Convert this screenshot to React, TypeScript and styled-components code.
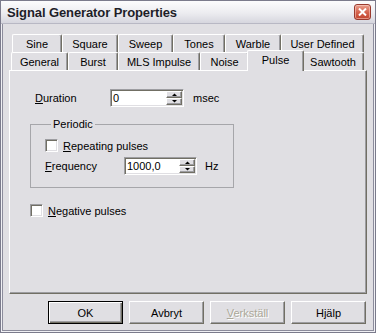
import React from 'react';
import styled, { createGlobalStyle } from 'styled-components';

const Global = createGlobalStyle`
  html, body { margin: 0; padding: 0; background: #e0dfe3; }
  body { font-family: "Liberation Sans", Arial, sans-serif; font-size: 11px; color: #000; }
`;

const FACE = '#e0dfe3';
const SHADOW = '#9d9da1';
const DARK = '#716f64';

const Window = styled.div`
  width: 376px;
  height: 333px;
  box-sizing: border-box;
  border: 1px solid #7b7b8c;
  box-shadow: inset 0 0 0 1px #f0f0f4, inset 0 0 0 2px #8c8c9c;
  background: ${FACE};
  display: flex;
  flex-direction: column;
`;

const TitleBar = styled.div`
  height: 22px;
  flex: none;
  display: flex;
  align-items: center;
  justify-content: space-between;
  padding: 0 4px 0 6px;
  background: linear-gradient(#fcfcfd, #ececf0 55%, #d6d6de);
  border-bottom: 1px solid #b8b8c4;
`;

const Title = styled.span`
  font-weight: bold;
  font-size: 13px;
  color: #1e1e28;
  letter-spacing: -0.1px;
`;

const CloseBtn = styled.div`
  width: 17px;
  height: 16px;
  box-sizing: border-box;
  border: 1px solid #9a3a2e;
  border-radius: 3px;
  background: linear-gradient(#eaa08f, #d4604a 55%, #c2452f);
  box-shadow: inset 0 0 0 1px rgba(255, 220, 210, 0.5);
  display: flex;
  align-items: center;
  justify-content: center;
`;

const Body = styled.div`
  flex: 1;
  display: flex;
  flex-direction: column;
  padding: 10px 8px 0 8px;
`;

const TabRow = styled.div<{ $indent: number }>`
  display: flex;
  align-items: flex-end;
  height: 18px;
  padding-left: ${p => p.$indent}px;
`;

const Tab = styled.div<{ $w: number; $sel?: boolean }>`
  box-sizing: border-box;
  width: ${p => p.$w + (p.$sel ? 4 : 0)}px;
  height: ${p => (p.$sel ? 21 : 18)}px;
  margin: ${p => (p.$sel ? '0 -2px -1px -2px' : '0')};
  padding-bottom: ${p => (p.$sel ? 3 : 0)}px;
  position: ${p => (p.$sel ? 'relative' : 'static')};
  z-index: ${p => (p.$sel ? 1 : 'auto')};
  background: ${FACE};
  border-top: 1px solid #fff;
  border-left: 1px solid #fff;
  border-right: 1px solid ${DARK};
  box-shadow: inset -1px 0 0 ${SHADOW};
  border-radius: 2px 2px 0 0;
  display: flex;
  align-items: center;
  justify-content: center;
  white-space: nowrap;
`;

const Panel = styled.div`
  box-sizing: border-box;
  height: 224px;
  border-top: 1px solid #fff;
  border-left: 1px solid #fff;
  border-right: 1px solid ${DARK};
  border-bottom: 1px solid ${DARK};
  box-shadow: inset -1px -1px 0 ${SHADOW};
  padding: 18px 0 0 20px;
  display: flex;
  flex-direction: column;
  align-items: flex-start;
`;

const FieldRow = styled.div<{ $label: number }>`
  display: flex;
  align-items: center;
  height: 18px;
  & > label {
    width: ${p => p.$label}px;
    flex: none;
  }
`;

const DurationRow = styled(FieldRow)`
  padding-left: 5px;
`;

const Unit = styled.span<{ $gap: number }>`
  margin-left: ${p => p.$gap}px;
`;

const Field = styled.div<{ $w: number }>`
  box-sizing: border-box;
  width: ${p => p.$w}px;
  height: 18px;
  display: flex;
  background: #fff;
  border-top: 1px solid ${SHADOW};
  border-left: 1px solid ${SHADOW};
  border-bottom: 1px solid #fff;
  border-right: 1px solid #fff;
  box-shadow: inset 1px 1px 0 ${DARK}, inset -1px -1px 0 ${FACE};
  padding: 1px;
`;

const Value = styled.span`
  flex: 1;
  padding-left: 1px;
  line-height: 14px;
`;

const Spin = styled.div`
  width: 16px;
  display: flex;
  flex-direction: column;
`;

const SpinBtn = styled.div`
  flex: 1;
  box-sizing: border-box;
  background: ${FACE};
  border-top: 1px solid #fff;
  border-left: 1px solid #fff;
  border-right: 1px solid ${DARK};
  border-bottom: 1px solid ${DARK};
  box-shadow: inset -1px -1px 0 ${SHADOW};
  display: flex;
  align-items: center;
  justify-content: center;
`;

const Group = styled.fieldset`
  box-sizing: border-box;
  width: 204px;
  margin: 11px 0 0 0;
  padding: 8px 0 12px 14px;
  border: 1px solid #a6a6aa;
  min-width: 0;
  display: flex;
  flex-direction: column;
  gap: 5px;
  & > legend {
    margin-left: 6px;
    padding: 0 2px;
    line-height: 13px;
  }
`;

const CheckRow = styled.label<{ $top?: number }>`
  display: flex;
  align-items: center;
  gap: 5px;
  height: 13px;
  margin-top: ${p => p.$top ?? 0}px;
`;

const Box = styled.span`
  box-sizing: border-box;
  width: 13px;
  height: 13px;
  flex: none;
  background: #fff;
  border-top: 1px solid ${SHADOW};
  border-left: 1px solid ${SHADOW};
  border-bottom: 1px solid #fff;
  border-right: 1px solid #fff;
  box-shadow: inset 1px 1px 0 ${DARK}, inset -1px -1px 0 ${FACE};
`;

const ButtonBar = styled.div`
  display: flex;
  justify-content: flex-end;
  gap: 6px;
  margin: 7px 1px 0 0;
`;

const Button = styled.div<{ $default?: boolean; $disabled?: boolean }>`
  box-sizing: border-box;
  width: 75px;
  height: 23px;
  display: flex;
  align-items: center;
  justify-content: center;
  background: ${FACE};
  border: 1px solid ${p => (p.$default ? '#000' : 'transparent')};
  border-top-color: ${p => (p.$default ? '#000' : '#fff')};
  border-left-color: ${p => (p.$default ? '#000' : '#fff')};
  border-right-color: ${p => (p.$default ? '#000' : DARK)};
  border-bottom-color: ${p => (p.$default ? '#000' : DARK)};
  box-shadow: ${p =>
    p.$default
      ? `inset 1px 1px 0 #fff, inset -1px -1px 0 ${DARK}, inset -2px -2px 0 ${SHADOW}`
      : `inset -1px -1px 0 ${SHADOW}`};
  color: ${p => (p.$disabled ? '#aca899' : '#000')};
  text-shadow: ${p => (p.$disabled ? '1px 1px 0 #fff' : 'none')};
`;

const Arrow = ({ up }: { up?: boolean }) => (
  <svg width="5" height="3" viewBox="0 0 5 3">
    <path d={up ? 'M0 3h5L2.5 0.5z' : 'M0 0h5L2.5 2.5z'} fill="#000" />
  </svg>
);

const SpinEdit = ({ value, width }: { value: string; width: number }) => (
  <Field $w={width}>
    <Value>{value}</Value>
    <Spin>
      <SpinBtn>
        <Arrow up />
      </SpinBtn>
      <SpinBtn>
        <Arrow />
      </SpinBtn>
    </Spin>
  </Field>
);

const row1 = [
  { t: 'Sine', w: 50 },
  { t: 'Square', w: 56 },
  { t: 'Sweep', w: 55 },
  { t: 'Tones', w: 52 },
  { t: 'Warble', w: 56 },
  { t: 'User Defined', w: 83 },
];
const row2 = [
  { t: 'General', w: 57 },
  { t: 'Burst', w: 50 },
  { t: 'MLS Impulse', w: 82 },
  { t: 'Noise', w: 49 },
  { t: 'Pulse', w: 53, sel: true },
  { t: 'Sawtooth', w: 62 },
];

export default function App() {
  return (
    <>
      <Global />
      <Window>
        <TitleBar>
          <Title>Signal Generator Properties</Title>
          <CloseBtn>
            <svg width="9" height="8" viewBox="0 0 9 8">
              <path d="M1 0.5L8 7.5M8 0.5L1 7.5" stroke="#fff" strokeWidth="2" />
            </svg>
          </CloseBtn>
        </TitleBar>
        <Body>
          <TabRow $indent={3}>
            {row1.map(r => (
              <Tab key={r.t} $w={r.w}>
                {r.t}
              </Tab>
            ))}
          </TabRow>
          <TabRow $indent={2}>
            {row2.map(r => (
              <Tab key={r.t} $w={r.w} $sel={r.sel}>
                {r.t}
              </Tab>
            ))}
          </TabRow>
          <Panel>
            <DurationRow $label={75}>
              <label>
                <u>D</u>uration
              </label>
              <SpinEdit value="0" width={74} />
              <Unit $gap={9}>msec</Unit>
            </DurationRow>
            <Group>
              <legend>Periodic</legend>
              <CheckRow>
                <Box />
                <span>
                  <u>R</u>epeating pulses
                </span>
              </CheckRow>
              <FieldRow $label={79}>
                <label>
                  <u>F</u>requency
                </label>
                <SpinEdit value="1000,0" width={73} />
                <Unit $gap={8}>Hz</Unit>
              </FieldRow>
            </Group>
            <CheckRow $top={16}>
              <Box />
              <span>
                <u>N</u>egative pulses
              </span>
            </CheckRow>
          </Panel>
          <ButtonBar>
            <Button $default>OK</Button>
            <Button>Avbryt</Button>
            <Button $disabled>
              <span>
                <u>V</u>erkställ
              </span>
            </Button>
            <Button>Hjälp</Button>
          </ButtonBar>
        </Body>
      </Window>
    </>
  );
}
